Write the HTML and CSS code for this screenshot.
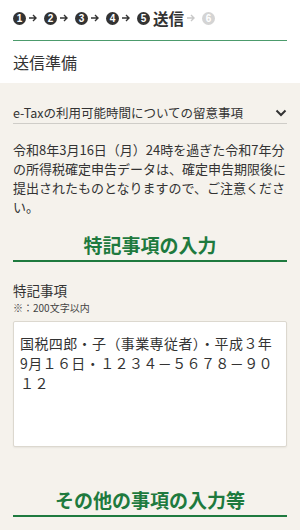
FILE: index.html
```html
<!DOCTYPE html>
<html lang="ja">
<head>
<meta charset="utf-8">
<title>送信準備</title>
<link rel="stylesheet" href="styles.css">
</head>
<body>
<header class="top">
  <div class="steps">
    <span class="num">1</span><svg class="arrow" viewBox="0 0 8 8"><path d="M0 4H7M4 1L7 4L4 7"/></svg>
    <span class="num">2</span><svg class="arrow" viewBox="0 0 8 8"><path d="M0 4H7M4 1L7 4L4 7"/></svg>
    <span class="num">3</span><svg class="arrow" viewBox="0 0 8 8"><path d="M0 4H7M4 1L7 4L4 7"/></svg>
    <span class="num">4</span><svg class="arrow" viewBox="0 0 8 8"><path d="M0 4H7M4 1L7 4L4 7"/></svg>
    <span class="num">5</span><span class="current">送信</span><svg class="arrow off" viewBox="0 0 8 8"><path d="M0 4H7M4 1L7 4L4 7"/></svg>
    <span class="num off">6</span>
  </div>
  <h1 class="page-title">送信準備</h1>
</header>
<main class="content">
  <div class="notice-head">
    <span>e-Taxの利用可能時間についての留意事項</span>
    <svg class="chev" viewBox="0 0 12 8"><path d="M1.5 1.5L6 6L10.5 1.5"/></svg>
  </div>
  <p class="notice-body">令和8年3月16日（月）24時を過ぎた令和7年分の所得税確定申告データは、確定申告期限後に提出されたものとなりますので、ご注意ください。</p>
  <h2 class="section-title">特記事項の入力</h2>
  <label class="field-label" for="memo">特記事項</label>
  <div class="field-note">※：200文字以内</div>
  <textarea id="memo" class="memo">国税四郎・子（事業専従者）・平成３年9月１６日・１２３４－５６７８－９０１２</textarea>
  <h2 class="section-title second">その他の事項の入力等</h2>
</main>
</body>
</html>
```
FILE: styles.css
```css
* { box-sizing: border-box; }
html, body { margin: 0; padding: 0; }
body {
  font-family: "Noto Sans CJK JP", "Noto Sans", sans-serif;
  color: #333;
  background: #f5f2ec;
  width: 300px;
  min-height: 530px;
  overflow: hidden;
}
.top {
  background: #fff;
  padding: 12px 13px 10px;
}
.steps {
  display: flex;
  align-items: center;
  height: 29px;
  padding-bottom: 16px;
  border-bottom: 1px solid #4c9b6c;
}
.num {
  width: 13px;
  height: 13px;
  border-radius: 50%;
  background: #333;
  color: #fff;
  font-family: "Liberation Sans", sans-serif;
  font-size: 10px;
  font-weight: 700;
  line-height: 13px;
  text-align: center;
  flex: none;
}
.num.off { background: #d4d4d4; }
.arrow {
  width: 8px;
  height: 8px;
  margin: 0 7px 0 3px;
  flex: none;
  fill: none;
  stroke: #333;
  stroke-width: 1.4;
}
.arrow.off { stroke: #c8c8c8; }
.current {
  margin-left: 3px;
  font-size: 15.5px;
  font-weight: 700;
  line-height: 13px;
  color: #333;
}
.page-title {
  margin: 10px 0 0;
  font-size: 16px;
  font-weight: 400;
  line-height: 22px;
  color: #333;
}
.content {
  display: block;
  padding: 0 13px;
}
.notice-head {
  display: flex;
  justify-content: space-between;
  align-items: center;
  padding-top: 20px;
  height: 41px;
  border-bottom: 1px solid #cfcdc8;
  font-size: 12.5px;
  line-height: 20px;
}
.chev {
  width: 12px;
  height: 8px;
  fill: none;
  stroke: #333;
  stroke-width: 2;
}
.notice-body {
  margin: 16px 0 0;
  font-size: 13px;
  line-height: 19px;
}
.section-title {
  margin: 16px 0 0;
  padding-bottom: 2px;
  border-bottom: 2px solid #1e7a3e;
  color: #1e7a3e;
  font-size: 19px;
  font-weight: 700;
  line-height: 26px;
  text-align: center;
}
.section-title.second { margin-top: 40px; }
.field-label {
  display: block;
  margin-top: 19px;
  font-size: 13.5px;
  line-height: 18px;
}
.field-note {
  font-size: 10px;
  line-height: 17px;
  color: #444;
}
.memo {
  display: block;
  margin: 5px 0 0;
  width: 274px;
  height: 126px;
  padding: 11px 6px;
  border: 1px solid #dcd8cf;
  border-radius: 2px;
  box-shadow: 0 1px 2px rgba(0,0,0,0.06);
  background: #fff;
  resize: none;
  font-family: "Noto Sans CJK JP", sans-serif;
  font-size: 14px;
  letter-spacing: 0.4px;
  line-height: 20px;
  color: #333;
  overflow: hidden;
}
```
